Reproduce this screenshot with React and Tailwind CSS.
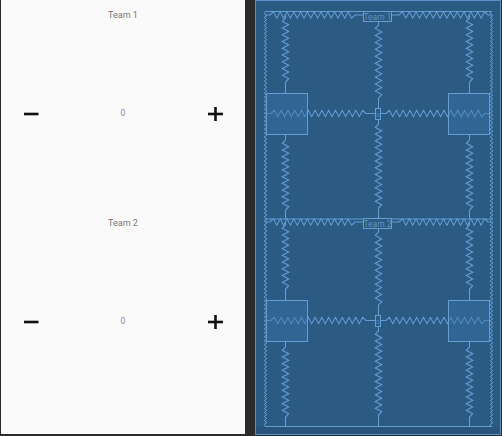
import React from 'react';

const LINE = '#639dd3';

const zz = (a, b, c, amp, step, horizontal) => {
  const pts = [];
  const n = Math.max(2, Math.round((b - a) / step));
  for (let i = 0; i <= n; i++) {
    const t = a + ((b - a) * i) / n;
    const off = i === 0 || i === n ? 0 : i % 2 ? -amp : amp;
    pts.push(horizontal ? `${t},${c + off}` : `${c + off},${t}`);
  }
  return pts.join(' ');
};

const hs = (x1, z1, z2, x2, y) => `${x1},${y} ${zz(z1, z2, y, 3.2, 3.4, true)} ${x2},${y}`;
const vs = (x, y1, z1, z2, y2) => `${x},${y1} ${zz(z1, z2, x, 3.2, 3.4, false)} ${x},${y2}`;

function BlueHalf({ o, title }) {
  const springs = [
    hs(265.5, 270, 355, 363.5, 15 + o),
    hs(391.5, 399, 488, 491.5, 15 + o),
    vs(285.5, 15 + o, 18 + o, 82 + o, 93.5 + o),
    vs(469.5, 15 + o, 18 + o, 82 + o, 93.5 + o),
    vs(378.5, 21.5 + o, 25 + o, 98 + o, 108.5 + o),
    hs(266, 271, 366, 375.5, 113.5 + o),
    hs(380.5, 386, 485, 490, 113.5 + o),
    vs(285.5, 134.5 + o, 140 + o, 210 + o, 219 + o),
    vs(469.5, 134.5 + o, 140 + o, 210 + o, 219 + o),
    vs(378.5, 119.5 + o, 124 + o, 208 + o, 219 + o),
  ];
  return (
    <g>
      {springs.map((p, i) => (
        <polyline key={i} points={p} fill="none" stroke={LINE} strokeWidth="1.1" />
      ))}
      <rect x="266.5" y={93.5 + o} width="41" height="41" fill="#3a74a8" fillOpacity="0.45" stroke={LINE} strokeWidth="1" />
      <rect x="448.5" y={93.5 + o} width="41" height="41" fill="#3a74a8" fillOpacity="0.45" stroke={LINE} strokeWidth="1" />
      <rect x="363.5" y={11.5 + o} width="28" height="10" fill="#2b5a82" stroke={LINE} strokeWidth="1" />
      <text x="377.5" y={19.5 + o} textAnchor="middle" fontSize="8.5" fill="#5f93c6" fontFamily="Roboto, sans-serif">{title}</text>
      <rect x="375.5" y={108.5 + o} width="5" height="11" fill="#2b5a82" stroke={LINE} strokeWidth="1" />
      <text x="378" y={116.5 + o} textAnchor="middle" fontSize="6" fill="#5f93c6" fontFamily="Roboto, sans-serif">0</text>
    </g>
  );
}

function Blueprint() {
  return (
    <div className="w-[246px] h-[435px] border border-[#5a90c3] bg-[#2b5a82] flex flex-col">
      <svg width="244" height="433" viewBox="256 1 244 433" className="block">
        <rect x="256" y="427" width="244" height="7" fill="#29557c" />
        <line x1="265" y1="11.5" x2="492" y2="11.5" stroke={LINE} strokeWidth="1" />
        <line x1="265" y1="219" x2="492" y2="219" stroke={LINE} strokeWidth="1" />
        <line x1="265" y1="426.5" x2="492" y2="426.5" stroke={LINE} strokeWidth="1" />
        <polyline points={zz(11.5, 426.5, 265.5, 1.5, 2, false)} fill="none" stroke={LINE} strokeWidth="1" />
        <polyline points={zz(11.5, 426.5, 491.5, 1.5, 2, false)} fill="none" stroke={LINE} strokeWidth="1" />
        <BlueHalf o={0} title="Team 1" />
        <BlueHalf o={207} title="Team 2" />
      </svg>
    </div>
  );
}

function Minus() {
  return (
    <svg width="15" height="14" viewBox="0 0 15 14" className="block">
      <rect x="0" y="5.7" width="14.5" height="2.6" fill="#111" />
    </svg>
  );
}

function Plus() {
  return (
    <svg width="15" height="14" viewBox="0 0 15 14" className="block">
      <rect x="0" y="5.7" width="15" height="2.6" fill="#111" />
      <rect x="6.2" y="0" width="2.6" height="14" fill="#111" />
    </svg>
  );
}

function Half({ title }) {
  return (
    <div className="h-[208px] flex flex-col">
      <div className="mt-[10px] h-[11px] leading-[11px] text-[9px] text-[#777] text-center">{title}</div>
      <div className="mt-[82px] h-[21px] flex items-center">
        <div className="w-[60px] flex justify-center"><Minus /></div>
        <div className="flex-1 text-center text-[8.5px] leading-[21px] text-[#8a8a8a]">0</div>
        <div className="w-[60px] flex justify-center"><Plus /></div>
      </div>
    </div>
  );
}

export default function App() {
  return (
    <div className="flex w-[502px] h-[436px] bg-[#2b2b2b] overflow-hidden [font-family:Roboto,sans-serif]">
      <div className="ml-px w-[244px] h-[434px] bg-[#fafafa] flex flex-col">
        <Half title="Team 1" />
        <Half title="Team 2" />
      </div>
      <div className="w-[10px]" />
      <Blueprint />
    </div>
  );
}
